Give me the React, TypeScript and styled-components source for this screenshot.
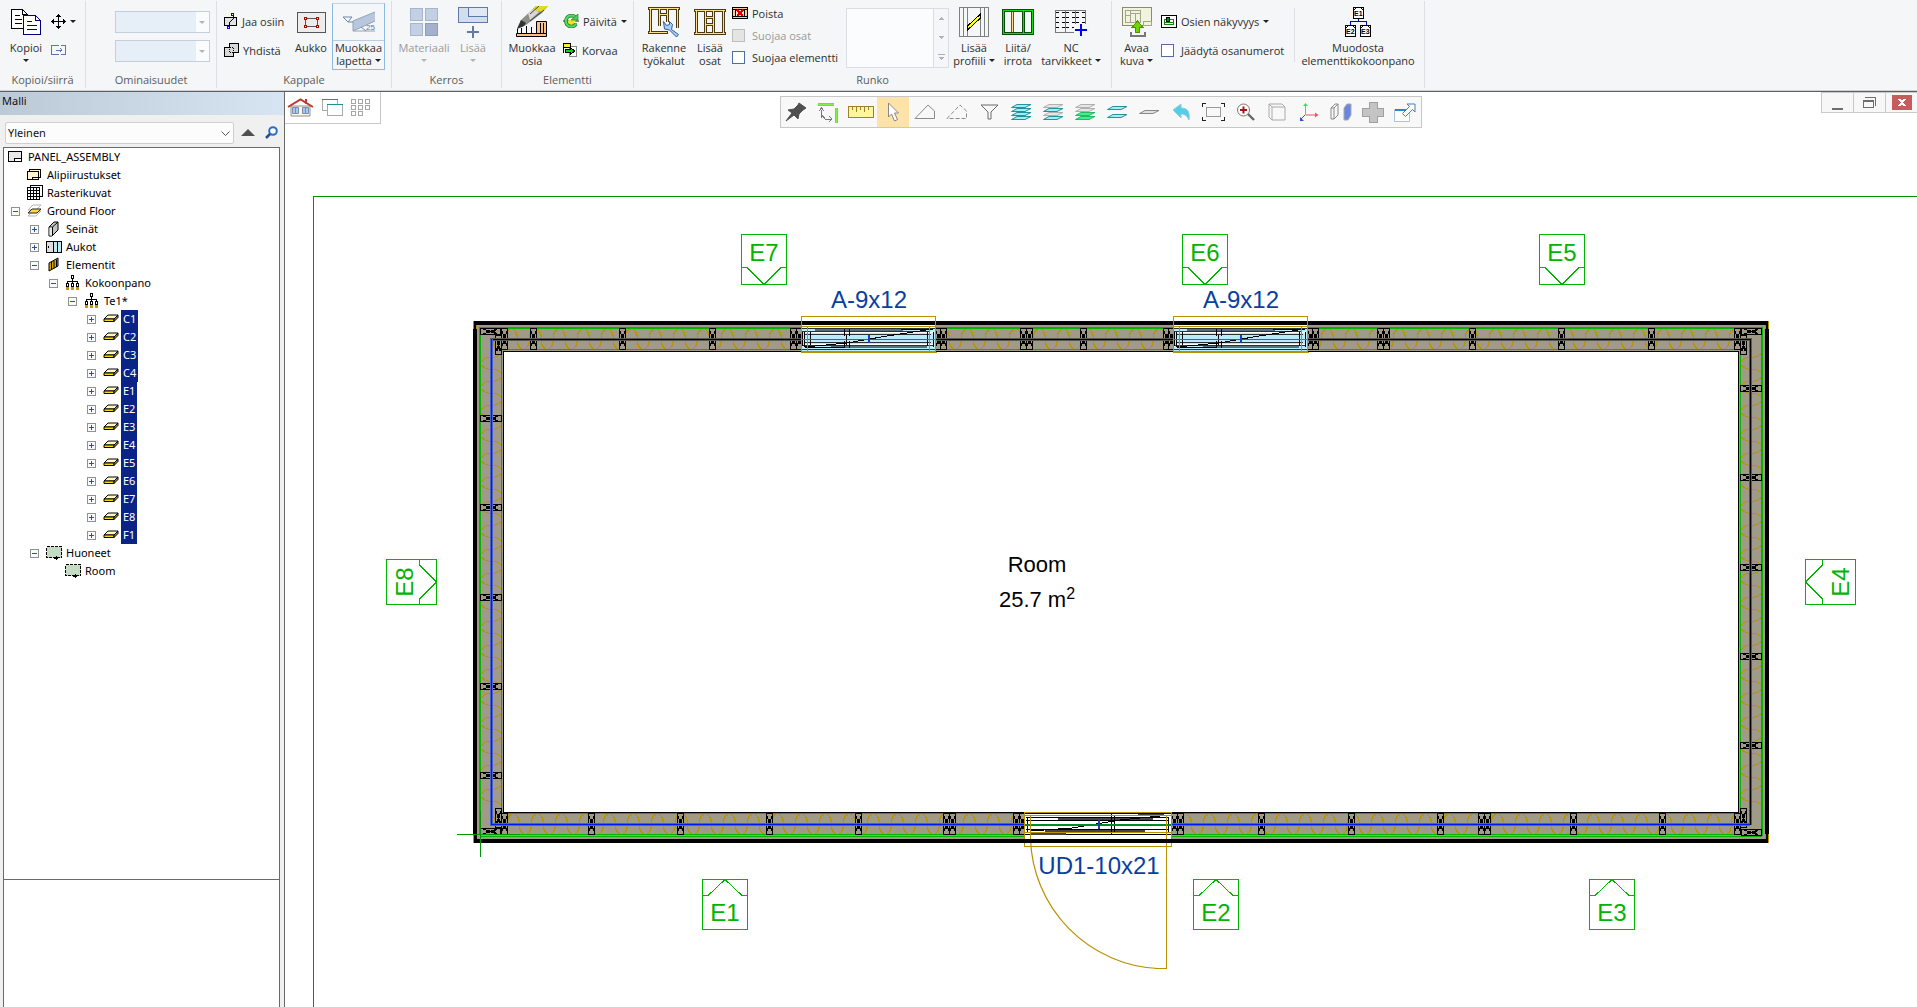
import React from "react";
import styled, { createGlobalStyle } from "styled-components";

const Global = createGlobalStyle`
  * { box-sizing: border-box; }
  body { margin: 0; background: #fff; font-family: "Open Sans", "Noto Sans", sans-serif; font-size: 11px; color: #262626; }
  button, select { font: inherit; color: inherit; }
  svg { display: block; flex: none; }
`;

/* ---------- shell ---------- */

const Shell = styled.div`
  display: flex;
  flex-direction: column;
  height: 100vh;
  overflow: hidden;
`;

const Workspace = styled.div`
  display: flex;
  flex: 1;
  min-height: 0;
`;

/* ---------- ribbon ---------- */

const Ribbon = styled.header`
  display: flex;
  flex: none;
  padding-top: 1px;
  height: 92px;
  background: #f4f6f8;
  border-bottom: 1px solid #5f5f5f;
  box-shadow: inset 0 -1px 0 #d0d2d4;
`;

const GroupBox = styled.section<{ $w: number }>`
  display: flex;
  flex-direction: column;
  flex: none;
  width: ${(p) => p.$w}px;
  margin-bottom: 3px;
  border-right: 1px solid #dcdfe3;
`;

const GroupBody = styled.div<{ $pad: number }>`
  display: flex;
  align-items: flex-start;
  gap: 4px;
  height: 72px;
  padding: 2px 0 0 ${(p) => p.$pad}px;
`;

const GroupTitle = styled.h2`
  margin: 0;
  font-size: 11px;
  font-weight: 400;
  line-height: 16px;
  text-align: center;
  color: #5c5c5c;
`;

const BigButton = styled.button<{ $w: number; $off?: boolean }>`
  display: flex;
  flex-direction: column;
  align-items: center;
  flex: none;
  width: ${(p) => p.$w}px;
  height: 67px;
  padding: 0;
  border: 0;
  background: none;
  line-height: 13px;
  white-space: nowrap;
  color: ${(p) => (p.$off ? "#9a9a9a" : "#2e2e2e")};
`;

const IconBox = styled.span`
  display: flex;
  align-items: center;
  justify-content: center;
  height: 38px;
`;

const ActiveButton = styled(BigButton)`
  border: 1px solid #8db8e0;
  border-top-color: #c6d3e0;

  ${IconBox} {
    width: 100%;
    height: 37px;
    border-bottom: 1px solid #b9cde2;
  }
`;

const Line = styled.span`
  display: flex;
  align-items: center;
  justify-content: center;
  gap: 3px;
  min-height: 13px;
`;

const Caret = styled.i<{ $off?: boolean }>`
  width: 0;
  height: 0;
  border: 3px solid transparent;
  border-top-color: ${(p) => (p.$off ? "#b4b4b4" : "#222")};
  border-bottom-width: 0;
`;

const SmallCol = styled.div<{ $w: number; $dense?: boolean }>`
  display: flex;
  flex-direction: column;
  flex: none;
  gap: ${(p) => (p.$dense ? 2 : 9)}px;
  width: ${(p) => p.$w}px;
  padding-top: ${(p) => (p.$dense ? 0 : 8)}px;
`;

const SmallButton = styled.button`
  display: flex;
  align-items: center;
  gap: 4px;
  height: 20px;
  padding: 0;
  border: 0;
  background: none;
  white-space: nowrap;
  color: #2e2e2e;
`;

const Check = styled.label<{ $off?: boolean }>`
  display: flex;
  align-items: center;
  gap: 7px;
  height: 20px;
  white-space: nowrap;
  color: ${(p) => (p.$off ? "#9a9a9a" : "#2e2e2e")};

  input {
    appearance: none;
    width: 13px;
    height: 13px;
    margin: 0;
    border: 1px solid #4f6ea8;
    background: #fff;
  }
  input:disabled {
    border-color: #bdbdbd;
    background: #e4e4e4;
  }
`;

const PropField = styled.div`
  position: relative;
  height: 20px;

  select {
    appearance: none;
    display: block;
    width: 100%;
    height: 22px;
    border: 1px solid #c5cedb;
    border-radius: 0;
    background: linear-gradient(90deg, #e6eef8 80px, #fafbfc 80px);
    opacity: 1;
  }
  ${Caret} {
    position: absolute;
    right: 5px;
    top: 10px;
  }
`;

const PropCol = styled.div`
  display: flex;
  flex-direction: column;
  gap: 9px;
  width: 95px;
  padding-top: 8px;
`;

const Gallery = styled.div`
  display: flex;
  flex: none;
  width: 103px;
  height: 60px;
  margin-top: 5px;
  border: 1px solid #dadde2;
  background: #fbfcfd;
`;

const GallerySteps = styled.div`
  display: flex;
  flex-direction: column;
  width: 15px;
  margin-left: auto;
  border-left: 1px solid #dadde2;
  background: #f4f6f8;

  button {
    display: flex;
    align-items: center;
    justify-content: center;
    flex: 1;
    padding: 0;
    border: 0;
    background: none;
  }
`;

const Divider = styled.div`
  flex: none;
  width: 1px;
  height: 54px;
  margin: 5px 0 0 4px;
  background: #dcdfe3;
`;

/* ---------- side panel ---------- */

const Side = styled.aside`
  display: flex;
  flex-direction: column;
  flex: none;
  width: 285px;
  border-right: 1px solid #6a6a6a;
  background: #f0f0f0;
  font-family: "Noto Sans", "Open Sans", sans-serif;
`;

const SideTitle = styled.h1`
  margin: 0;
  padding: 0 2px;
  height: 23px;
  font-size: 11px;
  font-weight: 400;
  line-height: 18px;
  color: #111;
  background: linear-gradient(90deg, #bccad8, #d7e4f1);
`;

const Filter = styled.div`
  display: flex;
  align-items: center;
  gap: 7px;
  padding: 7px 5px 3px;

  button {
    padding: 0;
    border: 0;
    background: none;
  }
  button + button {
    margin-left: 3px;
  }
`;

const Combo = styled.div`
  position: relative;
  width: 229px;

  select {
    appearance: none;
    display: block;
    width: 100%;
    height: 22px;
    padding: 0 2px;
    border: 1px solid #cfcfcf;
    border-radius: 2px;
    background: #fcfcfc;
    color: #111;
  }
  svg {
    position: absolute;
    right: 4px;
    top: 9px;
    pointer-events: none;
  }
`;

const TreeBox = styled.ul`
  flex: 1 1 734px;
  min-height: 0;
  margin: 0 4px 0 3px;
  padding: 0;
  overflow: hidden;
  list-style: none;
  border: 1px solid #6a6a6a;
  background: #fff;
`;

const Detail = styled.div`
  flex: 0 1 127px;
  margin: 0 4px 0 3px;
  border: 1px solid #6a6a6a;
  border-width: 0 1px;
  background: #fff;
`;

const TreeRow = styled.li<{ $level: number }>`
  display: flex;
  align-items: center;
  height: 18px;
  padding-left: ${(p) => (p.$level ? p.$level * 19 - 12 : 4)}px;
  color: #000;
`;

const Expander = styled.button`
  display: flex;
  width: 9px;
  height: 9px;
  padding: 0;
  border: 0;
  background: none;
`;

const ExpanderSlot = styled.span`
  display: flex;
  width: 16px;
  padding-top: 2px;
`;

const TreeIcon = styled.span`
  display: flex;
  width: 18px;
`;

const TreeLabel = styled.span<{ $on: boolean }>`
  padding: 0 2px;
  line-height: 18px;
  white-space: nowrap;
  color: ${(p) => (p.$on ? "#fff" : "#000")};
  background: ${(p) => (p.$on ? "#0a2387" : "none")};
`;

/* ---------- drawing area ---------- */

const Main = styled.main`
  position: relative;
  flex: 1;
  min-width: 0;
  overflow: hidden;
  background: #fff;
`;

const Plan = styled.svg`
  position: absolute;
  inset: 0;
  width: 100%;
  height: 100%;
  font-family: "Liberation Sans", Arial, sans-serif;
`;

const Overlay = styled.div`
  position: relative;
  display: grid;
  grid-template-columns: 1fr auto 1fr;
  align-items: start;
`;

const ViewTabs = styled.div`
  display: flex;
  align-items: center;
  justify-self: start;
  gap: 8px;
  width: 96px;
  height: 32px;
  padding-left: 2px;
  border: 1px solid #c8c8c8;
  border-width: 0 1px 1px 0;
  background: #fff;
`;

const ToolStrip = styled.div`
  display: flex;
  margin-top: 4px;
  border: 1px solid #c8c8c8;
  background: #f8f8f8;
`;

const Tool = styled.button<{ $on?: boolean }>`
  display: flex;
  align-items: center;
  justify-content: center;
  width: 32px;
  height: 30px;
  padding: 0;
  border: 0;
  background: ${(p) => (p.$on ? "#fde3a7" : "none")};
`;

const PlainButton = styled.button`
  padding: 0;
  border: 0;
  background: none;
`;

const WindowButtons = styled.div`
  display: flex;
  justify-self: end;
`;

const WinButton = styled.button`
  display: flex;
  align-items: center;
  justify-content: center;
  width: 32px;
  height: 21px;
  padding: 0;
  border: 1px solid #cacaca;
  border-right-width: 0;
  background: #f7f7f7;
`;

/* ---------- icons ---------- */

type IconProps = { w: number; h: number; children: React.ReactNode; soft?: boolean };
const Icon = ({ w, h, children, soft }: IconProps) => (
  <svg width={w} height={h} viewBox={`0 0 ${w} ${h}`} fill="none" shapeRendering={soft ? "auto" : "crispEdges"} aria-hidden="true">
    {children}
  </svg>
);

const CopyIcon = () => (
  <Icon w={32} h={28}>
    <path d="M1.5 1.5h11l5 5v14h-16z" fill="#fff" stroke="#000" />
    <path d="M12.5 1.5v5h5M5 7.5h5M5 11.5h7M5 15.5h7" stroke="#000" />
    <path d="M13.5 7.5h12l5 5v14h-17z" fill="#fff" stroke="#00007c" />
    <path d="M25.5 7.5v5h5M17 13.5h5M17 17.5h10M17 21.5h10" stroke="#00007c" />
  </Icon>
);
const MoveIcon = () => (
  <Icon w={15} h={15}>
    <path d="M7.5 1v13M1 7.5h13" stroke="#000" />
    <path d="M5 3h5L7.5 0zM5 12h5l-2.5 3zM3 5v5L0 7.5zM12 5v5l3-2.5z" fill="#000" />
  </Icon>
);
const MoveBoxIcon = () => (
  <Icon w={15} h={10}>
    <path d="M8 .5H.5v9H8M10 .5h4v9h-4M5 5h6M9 3l2 2-2 2" stroke="#5b76ad" />
  </Icon>
);
const SplitIcon = () => (
  <Icon w={14} h={17}>
    <path d="M.5 4.5h12v8H.5z" fill="#e2e2e2" stroke="#000" />
    <path d="M9 3v3L5 10v4" stroke="#000" />
    <path d="M7.5 .5h2v2h-2zM3.5 13.5h2v2h-2z" fill="#fff" stroke="#0000f0" />
  </Icon>
);
const JoinIcon = () => (
  <Icon w={15} h={14}>
    <path d="M5.5 .5h9v9h-5v4h-9v-9h5z" fill="#d8d8d8" stroke="#000" />
    <path d="M5.5 4.5h4v5h-4z" stroke="#000" strokeDasharray="1 1" />
  </Icon>
);
const HoleIcon = () => (
  <Icon w={29} h={21}>
    <path d="M.5 .5h28v20H.5z" fill="#ececec" stroke="#555" />
    <path d="M8.5 6.5h12v8h-12z" stroke="#555" />
    <path d="M7.5 5.5h2v2h-2zM19.5 5.5h2v2h-2zM7.5 13.5h2v2h-2zM19.5 13.5h2v2h-2z" fill="#fff" stroke="#c00000" />
  </Icon>
);
const SlopeIcon = () => (
  <Icon w={34} h={24} soft>
    <path d="M11 11L33 2v9L11 21z" fill="#b9c7dc" />
    <path d="M11 11L33 2M11 21L33 11M11 11v10h22" stroke="#8fa3c0" />
    <path d="M1 7h9l-4 5zM6 12h5" stroke="#7187ab" />
    <path d="M19 17l5 4" stroke="#7187ab" />
    <text x="24" y="20" fontSize="8" fontFamily="Liberation Sans" fill="#5f769d">25</text>
  </Icon>
);
const MaterialIcon = () => (
  <Icon w={28} h={28}>
    <path d="M.5 .5h12v12H.5zM15.5 .5h12v12h-12zM.5 15.5h12v12H.5z" fill="#c3cfe2" stroke="#a6b5cd" />
    <path d="M15.5 15.5h12v12h-12z" fill="#a3b1cc" stroke="#8b9cbc" />
  </Icon>
);
const AddLayerIcon = () => (
  <Icon w={30} h={31}>
    <path d="M.5 .5h29v15H.5z" fill="#d3deed" stroke="#5f7aa6" />
    <path d="M10.5 .5v9h19v-9z" fill="#dfe8f4" stroke="#5f7aa6" />
    <path d="M15 19v12M9 25h12" stroke="#5f7aa6" strokeWidth="2" />
  </Icon>
);
const EditPartIcon = () => (
  <Icon w={32} h={32} soft>
    <path d="M.5 27.5h30v3H.5z" fill="#fcbf85" stroke="#000" />
    <path d="M1.5 27v-4M5.5 27v-5M10.5 27v-7M15.5 27v-6" stroke="#000" />
    <path d="M20.500 15.500h10V27.500h-10z" fill="#fcbf85" stroke="#000" />
    <path d="M24.5 17v10M27.5 17v10" stroke="#000" />
    <path d="M32 0H20L5 14 1 23l9-4L26 7z" fill="#8f8f8b" />
    <path d="M20 0h12l-6 6-9-2z" fill="#e2dc20" />
    <path d="M12 7l5-4 6 3-9 8z" fill="#d8d8d0" />
    <path d="M5 14l5 3-2 3-7 3z" fill="#333" />
    <path d="M23 0l-9 8M28 4L14 15" stroke="#444" />
  </Icon>
);
const RefreshIcon = () => (
  <Icon w={16} h={14} soft>
    <path d="M0 7h16M2 10h12" stroke="#222" />
    <path d="M4 9l2-3h7l-3 5H5z" fill="#f5e21a" />
    <path d="M12.5 3.500A5.500 5.500 0 1 0 13 10" stroke="#1f8a2b" strokeWidth="3.600" />
    <path d="M12.5 3.500A5.500 5.500 0 1 0 13 10" stroke="#5ad566" strokeWidth="2" />
    <path d="M15 0v6H8z" fill="#4ccc58" stroke="#1f8a2b" strokeWidth=".7" />
  </Icon>
);
const ReplaceIcon = () => (
  <Icon w={15} h={14}>
    <path d="M6.5 3.5h7v10h-7z" fill="#fff" stroke="#888" />
    <path d="M.5 .5h7v4h-7z" fill="#ffef3a" stroke="#000" />
    <path d="M.5 4v6" stroke="#000" />
    <path d="M2.5 6.5h5v-2l4 3.5-4 3.5v-2h-5z" fill="#12d212" stroke="#000" />
  </Icon>
);
const FrameWrenchIcon = () => (
  <Icon w={32} h={30}>
    <path d="M0 1.5h32M0 25.5h20" stroke="#4a3a10" strokeWidth="3" />
    <path d="M2.5 2v23M11.5 2v17M19.5 2v13M29.5 2v19M12 7.5h8" stroke="#4a3a10" strokeWidth="3" />
    <path d="M1 1.5h30M1 25.5h18M2.5 2v23M11.5 2v17M19.5 2v13M29.5 2v19M12 7.5h8" stroke="#ffe08a" />
    <path d="M15.500 14.500l3 4 3-1v-3l3 3-1 5 7 5-2 2.500-7-7-5-1z" fill="#a9cdf5" stroke="#2e5e9e" shapeRendering="auto" />
  </Icon>
);
const FrameIcon = () => (
  <Icon w={32} h={27}>
    <path d="M0 1.5h32M0 24.5h32M2.5 2v23M11.5 2v23M19.5 2v23M29.5 2v23M12 8.5h8M12 15.500h8" stroke="#4a3a10" strokeWidth="3" />
    <path d="M1 1.5h30M1 24.5h30M2.5 2v23M11.5 2v23M19.5 2v23M29.5 2v23M12 8.5h8M12 15.500h8" stroke="#ffe08a" />
  </Icon>
);
const RemoveIcon = () => (
  <Icon w={16} h={12}>
    <path d="M.5 .5h15v11H.5z" fill="#fcc89a" stroke="#000" />
    <path d="M0 2.500h16M0 9.500h16M3.500 2v8M12.500 2v8" stroke="#000" />
    <path d="M4 3h8v6H4z" fill="#f8e4d4" />
    <path d="M5 3l6 6M11 3L5 9" stroke="#e00000" strokeWidth="2" />
  </Icon>
);
const ProfileIcon = () => (
  <Icon w={30} h={30}>
    <path d="M.5 .5h29v29H.5zM4.5 0v30M8.5 0v30M21.5 0v30M25.5 0v30" stroke="#808080" />
    <path d="M8.5 19L21.5 7v4L8.5 23z" fill="#ffff20" stroke="#000" />
  </Icon>
);
const AttachIcon = () => (
  <Icon w={32} h={27}>
    <path d="M0 1.500h32M0 24.500h32M1.500 2v23M21.500 2v23M30.500 2v23" stroke="#064f06" strokeWidth="3" />
    <path d="M10.500 3v20" stroke="#6d5220" strokeWidth="3" />
    <path d="M10.500 3v20" stroke="#ffe08a" />
    <path d="M1 1.500h30M1 24.500h30M1.500 2v23M21.500 2v23M30.500 2v23" stroke="#10e010" />
  </Icon>
);
const NcIcon = () => (
  <Icon w={32} h={28}>
    <path d="M.5 2.5h30v22H.5zM10.5 2v23M20.5 2v23" stroke="#777" />
    <path d="M2.500 4v20M8.500 4v20M12.500 4v20M18.500 4v20M22.500 4v20M28.500 4v20" stroke="#000" strokeWidth="3" strokeDasharray="1 4" />
    <path d="M19 16h13v12H19z" fill="#f4f6f8" />
    <path d="M26 16v12M20 22h12" stroke="#0000f0" strokeWidth="2" />
  </Icon>
);
const OpenIcon = () => (
  <Icon w={30} h={30}>
    <path d="M.5 .5h29v18H.5z" fill="#f2f3dc" stroke="#8a8c70" />
    <path d="M3.5 3.5h15v12h-15zM8.5 3v12M3 8.5h6M9 6.5h9M13.5 6v9M21.5 14.5h8v4h-8z" stroke="#a3a58c" />
    <path d="M8.5 25v4h14v-4" stroke="#777" strokeWidth="2" />
    <path d="M15.5 14l5 6h-3v5h-4v-5h-3z" fill="#6fd400" stroke="#4c9400" />
  </Icon>
);
const VisibilityIcon = () => (
  <Icon w={16} h={13}>
    <path d="M.5 .5h15v12H.5z" fill="#fff" stroke="#000" />
    <path d="M3.500 4.500h9v5h-9zM4 7.500h8" stroke="#0b8a0b" />
    <path d="M5.5 2.5h3v4h-3z" stroke="#000" fill="#0b8a0b" />
  </Icon>
);
const AssemblyIcon = () => (
  <Icon w={27} h={30}>
    <path d="M13.5 12v3M5.5 18v-3.5h16V18" stroke="#0000e0" />
    {[[8, 0, "E1"], [0, 18, "E2"], [15, 18, "E3"]].map(([x, y, t]) => (
      <g key={t as string} transform={`translate(${x} ${y})`}>
        <path d="M.5 .5h10v11H.5z" fill="#fff" stroke="#000" />
        <path d="M1 3l2-2M10 3L8 1" stroke="#000" />
        <text x="1" y="9" fontSize="7" fontWeight="700" fontFamily="Liberation Sans" fill="#000">{t}</text>
      </g>
    ))}
  </Icon>
);

const HouseIcon = () => (
  <Icon w={27} h={19} soft>
    <path d="M4 8h19v10H4z" fill="#fff6df" stroke="#8f8f8f" />
    <path d="M19 1v5M1 9L13.5 1.5 26 9" stroke="#c0392b" strokeWidth="2" />
    <path d="M5.5 9.5h6v6h-6zM15.5 9.5h6v6h-6z" fill="#a9c8ee" stroke="#7a8fae" />
    <path d="M8.5 9v7M18.5 9v7" stroke="#7a8fae" />
  </Icon>
);
const WindowsIcon = () => (
  <Icon w={21} h={19}>
    <path d="M.5 1.5h15v11H.5z" fill="#fff" stroke="#aaa" />
    <path d="M0 1.5h16" stroke="#1e9090" />
    <path d="M5.5 6.5h15v11h-15z" fill="#fff" stroke="#aaa" />
    <path d="M5 6.5h16" stroke="#1e9090" />
  </Icon>
);
const GridIcon = () => (
  <Icon w={20} h={18}>
    <path d="M.5 .5h4v4h-4zM7.5 .5h4v4h-4zM14.5 .5h4v4h-4zM.5 6.5h4v4h-4zM7.5 6.5h4v4h-4zM14.5 6.5h4v4h-4zM.5 12.5h4v4h-4zM7.5 12.5h4v4h-4z" stroke="#a5a5a5" />
  </Icon>
);

/* a stack of sheets for the layer tools, one fill and stroke each */
const Sheets = ({ rows }: { rows: [number, string, string][] }) => (
  <Icon w={22} h={18} soft>
    {[...rows].reverse().map(([y, fill, stroke]) => (
      <path key={y} d={`M1.5 ${y + 3.5}L7 ${y + 0.5}h14l-6 3z`} fill={fill} stroke={stroke} />
    ))}
  </Icon>
);
const TEAL: [string, string] = ["#9cf0fa", "#2a8f98"];
const GREY: [string, string] = ["#e6e6e6", "#b0b0b0"];

const tools: { name: string; icon: React.ReactNode; on?: boolean }[] = [
  { name: "Kiinnitä", icon: <Icon w={24} h={20} soft><path d="M14 1l7 5-3 2-4 4-1 5-4-4-8 6 6-8-4-3 6-1 4-4z" fill="#505050" stroke="#505050" /></Icon> },
  { name: "Akselit", icon: <Icon w={24} h={21}><path d="M1 2h16M19 6v15" stroke="#aaa" strokeWidth="3" /><path d="M1 2h16M19 6v15" stroke="#80f040" /><path d="M4.5 16V8M2 9l2.5-3L7 9M5 13l3 4h6M12 14l3 3-3 3" stroke="#777" /></Icon> },
  { name: "Mitta", icon: <Icon w={26} h={13}><path d="M.5 .5h25v11H.5z" fill="#fff79a" stroke="#a08030" /><path d="M4.5 1v3M8.5 1v5M12.5 1v3M16.5 1v5M20.5 1v3" stroke="#a08030" /></Icon> },
  { name: "Valitse", on: true, icon: <Icon w={13} h={20} soft><path d="M1.5 1v14l3-3 3 7 3-1.5-3-6.5h4z" fill="#fff" stroke="#888" /></Icon> },
  { name: "Monikulmio", icon: <Icon w={22} h={16} soft><path d="M1 14.5L14 1l6.5 6v7.500z" stroke="#8a8a8a" /></Icon> },
  { name: "Katkomonikulmio", icon: <Icon w={22} h={16} soft><path d="M1 14.5L14 1l6.5 6v7.500z" stroke="#8a8a8a" strokeDasharray="4 2" /></Icon> },
  { name: "Suodatin", icon: <Icon w={19} h={16} soft><path d="M1 1h17l-7 7v7H8V8z" stroke="#6a6a6a" /></Icon> },
  { name: "Kaikki kerrokset", icon: <Sheets rows={[[1, ...TEAL], [5, ...TEAL], [9, ...TEAL], [13, ...TEAL]]} /> },
  { name: "Osa kerroksista", icon: <Sheets rows={[[1, ...GREY], [5, ...TEAL], [9, ...GREY], [13, ...TEAL]]} /> },
  { name: "Nykyinen kerros", icon: <Sheets rows={[[1, ...GREY], [5, ...GREY], [9, "#4aec8c", "#25b868"], [13, "#4aec8c", "#25b868"]]} /> },
  { name: "Kaksi kerrosta", icon: <Sheets rows={[[3, ...TEAL], [11, ...TEAL]]} /> },
  { name: "Yksi kerros", icon: <Sheets rows={[[7, "#e0e0e0", "#888"]]} /> },
  { name: "Kumoa", icon: <Icon w={19} h={18} soft><path d="M1 7l8-6v4c7 0 9 4 8 12-2-4-4-6-8-6v4z" fill="#4fd0e8" stroke="#9ac6d8" /></Icon> },
  { name: "Sovita", icon: <Icon w={23} h={18}><path d="M4.5 4.5h14v9h-14z" stroke="#999" /><path d="M.5 4V.5H4M19 .5h3.500V4M.5 14v3.500H4M19 17.5h3.500V14" stroke="#222" /></Icon> },
  { name: "Suurenna", icon: <Icon w={19} h={18} soft><circle cx="7.5" cy="7" r="6" fill="#fff" stroke="#777" /><path d="M12 11l6 6" stroke="#666" strokeWidth="2.400" /><path d="M7.5 3.5v7M4 7h7" stroke="#a01818" strokeWidth="2" /></Icon> },
  { name: "Kuutio", icon: <Icon w={18} h={18} soft><path d="M1 1h13l3 3v13H4l-3-3zM4 4h13M4 4v13M1 1l3 3" stroke="#aaa" /></Icon> },
  { name: "Koordinaatisto", icon: <Icon w={20} h={20} soft><path d="M6.5 13V2" stroke="#3ae05a" /><path d="M4 4l2.5-3L9 4z" fill="#3ae05a" /><path d="M7 13h11" stroke="#f05060" /><path d="M16 10.5l3.5 2.500-3.5 2.500z" fill="#f05060" /><path d="M6 13l-4 4" stroke="#3050d0" /><path d="M1 15v4h4z" fill="#3050d0" /></Icon> },
  { name: "Seinät 3D", icon: <Icon w={22} h={18} soft><path d="M1 5l4-4h3v11l-4 4H1zM4 5v11M1 5h3l4-4" stroke="#888" /><path d="M14 5l3-4h4v11l-3 5h-4z" fill="#6a86e0" stroke="#aaa" /></Icon> },
  { name: "Lisää", icon: <Icon w={22} h={21}><path d="M7 .5h8v6h6.500v8H15v6H7v-6H.5v-8H7z" fill="#c4c4c4" stroke="#a0a0a0" /></Icon> },
  { name: "Uusi ikkuna", icon: <Icon w={22} h={19} soft><path d="M.5 6.500h15v12H.5z" fill="#fff" stroke="#aac4dc" /><path d="M1 7h14" stroke="#2e86c8" strokeWidth="2" /><path d="M21 1v8l-2.500-2.500-7 7-3-3 7-7L13 1z" fill="#fff" stroke="#2e86c8" /></Icon> },
];

/* ---------- ribbon controls ---------- */

type BigProps = { w: number; icon: React.ReactNode; lines: string[]; caret?: boolean; off?: boolean; active?: boolean };
const Big = ({ w, icon, lines, caret, off, active }: BigProps) => {
  const Base = active ? ActiveButton : BigButton;
  return (
    <Base $w={w} $off={off} disabled={off}>
      <IconBox>{icon}</IconBox>
      {lines.map((t, i) => (
        <Line key={t}>
          {t}
          {caret && lines.length > 1 && i === lines.length - 1 && <Caret />}
        </Line>
      ))}
      {caret && lines.length === 1 && <Line><Caret $off={off} /></Line>}
    </Base>
  );
};

const Group = ({ w, pad, title, children }: { w: number; pad: number; title: string; children: React.ReactNode }) => (
  <GroupBox $w={w}>
    <GroupBody $pad={pad}>{children}</GroupBody>
    {title && <GroupTitle>{title}</GroupTitle>}
  </GroupBox>
);

const RibbonBar = () => (
  <Ribbon>
    <Group w={86} pad={5} title="Kopioi/siirrä">
      <Big w={42} icon={<CopyIcon />} lines={["Kopioi"]} caret />
      <SmallCol $w={30}>
        <SmallButton aria-label="Siirrä"><MoveIcon /><Caret /></SmallButton>
        <SmallButton aria-label="Siirrä osa"><MoveBoxIcon /></SmallButton>
      </SmallCol>
    </Group>
    <Group w={131} pad={29} title="Ominaisuudet">
      <PropCol>
        <PropField><select disabled aria-label="Ominaisuus 1" /><Caret $off /></PropField>
        <PropField><select disabled aria-label="Ominaisuus 2" /><Caret $off /></PropField>
      </PropCol>
    </Group>
    <Group w={175} pad={7} title="Kappale">
      <SmallCol $w={66}>
        <SmallButton><SplitIcon />Jaa osiin</SmallButton>
        <SmallButton><JoinIcon />Yhdistä</SmallButton>
      </SmallCol>
      <Big w={34} icon={<HoleIcon />} lines={["Aukko"]} />
      <Big w={53} icon={<SlopeIcon />} lines={["Muokkaa", "lapetta"]} caret active />
    </Group>
    <Group w={110} pad={4} title="Kerros">
      <Big w={56} icon={<MaterialIcon />} lines={["Materiaali"]} caret off />
      <Big w={34} icon={<AddLayerIcon />} lines={["Lisää"]} caret off />
    </Group>
    <Group w={132} pad={3} title="Elementti">
      <Big w={54} icon={<EditPartIcon />} lines={["Muokkaa", "osia"]} />
      <SmallCol $w={66}>
        <SmallButton><RefreshIcon />Päivitä <Caret /></SmallButton>
        <SmallButton><ReplaceIcon />Korvaa</SmallButton>
      </SmallCol>
    </Group>
    <Group w={478} pad={6} title="Runko">
      <Big w={48} icon={<FrameWrenchIcon />} lines={["Rakenne", "työkalut"]} />
      <Big w={36} icon={<FrameIcon />} lines={["Lisää", "osat"]} />
      <SmallCol $w={110} $dense>
        <SmallButton><RemoveIcon />Poista</SmallButton>
        <Check $off><input type="checkbox" disabled />Suojaa osat</Check>
        <Check><input type="checkbox" />Suojaa elementti</Check>
      </SmallCol>
      <Gallery>
        <GallerySteps>
          <button aria-label="Edellinen"><Icon w={6} h={3}><path d="M0 3h6L3 0z" fill="#aab2bd" /></Icon></button>
          <button aria-label="Seuraava"><Icon w={6} h={3}><path d="M0 0h6L3 3z" fill="#aab2bd" /></Icon></button>
          <button aria-label="Lisää vaihtoehtoja"><Icon w={7} h={6}><path d="M0 0h7v1H0zM0 3h6L3 6z" fill="#aab2bd" /></Icon></button>
        </GallerySteps>
      </Gallery>
      <Big w={42} icon={<ProfileIcon />} lines={["Lisää", "profiili"]} caret />
      <Big w={38} icon={<AttachIcon />} lines={["Liitä/", "irrota"]} />
      <Big w={60} icon={<NcIcon />} lines={["NC", "tarvikkeet"]} caret />
    </Group>
    <Group w={313} pad={4} title="">
      <Big w={41} icon={<OpenIcon />} lines={["Avaa", "kuva"]} caret />
      <SmallCol $w={125}>
        <SmallButton><VisibilityIcon />Osien näkyvyys <Caret /></SmallButton>
        <Check><input type="checkbox" />Jäädytä osanumerot</Check>
      </SmallCol>
      <Divider />
      <Big w={118} icon={<AssemblyIcon />} lines={["Muodosta", "elementtikokoonpano"]} />
    </Group>
  </Ribbon>
);

/* ---------- model tree ---------- */

const treeIcons: Record<string, React.ReactNode> = {
  root: <Icon w={14} h={12}><path d="M.5 .5h13v10H.5z" fill="#e8e8e8" stroke="#000" /><path d="M6.5 10.500V7.500h7v3z" fill="#fff" stroke="#000" /></Icon>,
  subs: <Icon w={14} h={12}><path d="M2.5 .5h11v8h-11z" fill="#fff3d0" stroke="#000" /><path d="M.5 2.5h11v8H.5z" fill="#fff3d0" stroke="#000" /><path d="M5.5 10V8.500h6" stroke="#000" /></Icon>,
  raster: <Icon w={16} h={15}><path d="M3.5 .5h12v11h-12z" fill="#fff" stroke="#000" /><path d="M.5 2.5h12v12H.5zM3.5 2v12M6.5 2v12M9.5 2v12M0 5.5h12M0 8.5h12M0 11.5h12" fill="#fff" stroke="#000" /></Icon>,
  floor: <Icon w={15} h={13} soft><path d="M1 12l5-5h8l-5 5zM1 6l5-5h8l-5 5z" stroke="#b5b5b5" /><path d="M1 9l4-4h9l-4 4z" fill="#ffd83a" stroke="#222" /></Icon>,
  wall: <Icon w={15} h={16} soft><path d="M3 6l5-5h4v8l-6 6H3z" fill="#c4c4c4" stroke="#000" /><path d="M3 6h3.500v9M6.500 6l5.500-5" stroke="#000" /><path d="M3.500 6.500H6V14.500H3.500z" fill="#dfeaea" /></Icon>,
  openings: <Icon w={16} h={12}><path d="M.5 .5h15v11H.5z" fill="#bfe8f0" stroke="#000" /><path d="M1 1h6v10H1z" fill="#ddd" /><path d="M7.5 0v12M11.5 0v12" stroke="#000" /><path d="M2 5h1v2H2z" fill="#000" /></Icon>,
  elements: <Icon w={14} h={15} soft><path d="M3 6l9-5v8l-9 5z" fill="#d8a800" stroke="#000" /><path d="M5.500 5v8M8 4v7.500M10.500 2.500v7.500" stroke="#000" /></Icon>,
  assembly: <Icon w={15} h={15}><path d="M7.500 4v4M2.500 8V6.500h10V8" stroke="#000" /><path d="M6.500 .5h2v3h-2zM1.500 8.5h2v3h-2zM6.500 8.5h2v3h-2zM11.500 8.5h2v3h-2z" fill="#fff" stroke="#000" /><path d="M1 12h3v3H1zM6 12h3v3H6zM11 12h3v3h-3z" fill="#c09a00" /></Icon>,
  panel: <Icon w={16} h={9} soft><path d="M1 5l4-4h10l-4 4z" fill="#fffbc0" stroke="#000" /><path d="M1 5h10v2.500H1z" fill="#ffd800" stroke="#000" /><path d="M11 5l4-4v2.500l-4 4z" fill="#a88a00" stroke="#000" /></Icon>,
  room: <Icon w={16} h={14}><path d="M.5 .5h15v11H.5z" fill="#c4dcc4" stroke="#000" strokeDasharray="3 1" /><path d="M8 12.500h4M10.500 10v4" stroke="#000" /></Icon>,
};

type Node = { label: string; level: number; icon: string; open?: boolean; on?: boolean };
const nodes: Node[] = [
  { label: "PANEL_ASSEMBLY", level: 0, icon: "root" },
  { label: "Alipiirustukset", level: 1, icon: "subs" },
  { label: "Rasterikuvat", level: 1, icon: "raster" },
  { label: "Ground Floor", level: 1, icon: "floor", open: true },
  { label: "Seinät", level: 2, icon: "wall", open: false },
  { label: "Aukot", level: 2, icon: "openings", open: false },
  { label: "Elementit", level: 2, icon: "elements", open: true },
  { label: "Kokoonpano", level: 3, icon: "assembly", open: true },
  { label: "Te1*", level: 4, icon: "assembly", open: true },
  ...["C1", "C2", "C3", "C4", "E1", "E2", "E3", "E4", "E5", "E6", "E7", "E8", "F1"].map((label) => ({
    label, level: 5, icon: "panel", open: false, on: true,
  })),
  { label: "Huoneet", level: 2, icon: "room", open: true },
  { label: "Room", level: 3, icon: "room" },
];

const SidePanel = () => (
  <Side>
    <SideTitle>Malli</SideTitle>
    <Filter>
      <Combo>
        <select aria-label="Näkymä"><option>Yleinen</option></select>
        <Icon w={9} h={6} soft><path d="M.5 .5l4 4 4-4" stroke="#555" /></Icon>
      </Combo>
      <button aria-label="Ylös"><Icon w={14} h={7} soft><path d="M0 7h14L7 0z" fill="#505050" /></Icon></button>
      <button aria-label="Etsi"><Icon w={13} h={13} soft><circle cx="8" cy="5" r="3.800" stroke="#2a6fbe" strokeWidth="2" fill="#fff" /><path d="M5 8l-4 4" stroke="#1f5098" strokeWidth="2.500" /></Icon></button>
    </Filter>
    <TreeBox>
      {nodes.map((n) => (
        <TreeRow key={`${n.level}-${n.label}`} $level={n.level}>
          {n.level > 0 && (
            <ExpanderSlot>
              {n.open !== undefined && (
                <Expander aria-label={n.open ? "Sulje" : "Avaa"}>
                  <Icon w={9} h={9}>
                    <path d="M.5 .5h8v8h-8z" fill="#fafafa" stroke="#919191" />
                    <path d={n.open ? "M2 4.5h5" : "M2 4.5h5M4.5 2v5"} stroke="#2f4f9f" />
                  </Icon>
                </Expander>
              )}
            </ExpanderSlot>
          )}
          <TreeIcon>{treeIcons[n.icon]}</TreeIcon>
          <TreeLabel $on={!!n.on}>{n.label}</TreeLabel>
        </TreeRow>
      ))}
    </TreeBox>
    <Detail />
  </Side>
);

/* ---------- floor plan ---------- */

const GREEN = "#00b400";
const GOLD = "#b89000";
const BEIGE = "#a09a88";

/* insulation: a run of rounded zigzags, along x; rotated for the side walls */
const wave = (length: number) => {
  let d = "";
  for (let x = 0; x + 24 <= length; x += 24) {
    d += `M${x + 3} 0L${x + 6} 4L${x + 7} 7V14L${x + 9} 18L${x + 12} 21M${x + 15} 21L${x + 18} 17L${x + 19} 14V7L${x + 21} 3L${x + 24} 0`;
  }
  return d;
};

const Stud = ({ x, y, flat, len = 21 }: { x: number; y: number; flat?: boolean; len?: number }) => (
  <g transform={`translate(${x} ${y})${flat ? " rotate(-90)" : ""}`} stroke="#000" fill="none">
    <rect x="0.5" y="0.5" width="6" height={len} fill={BEIGE} />
    <path d={`M1 3l5 ${len - 6}M6 3L1 ${len - 3}M3.5 6v${len - 11}`} />
    <path d="M2.5 7v3M4.500 7v3M2.5 13v3M4.500 13v3" />
  </g>
);

const topStuds = [501, 530, 619, 709, 790, 796, 935, 940, 1020, 1026, 1080, 1163, 1168, 1307, 1312, 1377, 1383, 1469, 1558, 1648, 1734];
const bottomStuds = [501, 588, 677, 766, 855, 943, 949, 1013, 1019, 1171, 1177, 1258, 1348, 1437, 1478, 1484, 1570, 1659, 1734];
const leftStuds = [422, 511, 601, 690, 779];
const rightStuds = [392, 481, 571, 660, 749];

const WindowMark = ({ x }: { x: number }) => (
  <g transform={`translate(${x} 0)`} fill="none">
    <rect x="0" y="325" width="135" height="27" fill="#fff" />
    <rect x="1" y="328" width="133" height="23" fill="#b9ebfb" />
    <path d="M3 332.500h129M3 344.500h129" stroke="#fff" />
    <path d="M0 328.500h135M0 331.500h128M4 334.500h126M4 342.500h126M0 345.500h132M0 349.500h135" stroke="#2a3438" />
    <path d="M14 330h88M30 347h96" stroke="#55707c" strokeWidth="2" />
    <path d="M4 347l42-4 40-7 46-7M100 329.500h30M4 347.500h40" stroke="#000" />
    <path d="M43.5 329v7M48.5 329v7M43.5 341v7M48.5 341v7M45.5 335v10M1.500 332v14M3.500 332v15M9.500 332v13M126 332v14M132.500 332v15" stroke="#000" />
    <path d="M0 339.500h135" stroke="#4f6a28" />
    <path d="M0 339.500h7M128 339.500h7" stroke={GREEN} />
    <path d="M67.5 335v8" stroke="#1540c0" strokeWidth="2" />
    <path d="M.5 316.5h134v35H.5zM0 326.500h135M6.500 327v25M128.500 327v25M0 352.500h136" stroke={GOLD} />
  </g>
);

const DoorMark = () => (
  <g fill="none">
    <rect x="1024" y="812" width="148" height="27" fill="#fff" />
    <path d="M1018 813.5h165M1026 817.5h143M1026 820.5h143M1026 829.5h143M1024 834.5h148" stroke="#000" />
    <path d="M1058 818.500h95M1045 831h100M1138 814.500h26M1030 833.500h36" stroke="#444" strokeWidth="2" />
    <path d="M1030 831l42-3 48-8 50-5" stroke="#000" />
    <path d="M1111.5 813v22M1114.5 816v16M1027.500 818v14M1168.500 818v14" stroke="#000" />
    <path d="M1024 824.500h148" stroke="#008a30" strokeWidth="2" />
    <path d="M1098.5 820v9" stroke="#1540c0" strokeWidth="2" />
    <path d="M1024.5 812.5h147v34h-147zM1024 815.5h147M1024 832.5h147M1030.5 815v24M1166.5 815v153.500h-12" stroke={GOLD} />
    <path d="M1030.5 839A134 134 0 0 0 1158 968.5" stroke={GOLD} shapeRendering="auto" strokeWidth="1.200" />
    <rect x="1024" y="839" width="148" height="4" fill="#000" />
  </g>
);

const Marker = ({ x, y, dir, label }: { x: number; y: number; dir: "up" | "down" | "left" | "right"; label: string }) => {
  const shapes = {
    down: "M.5 .5h45v50H.5zM0 33.5h6l17 17 17-17h6",
    up: "M.5 .5h45v50H.5zM0 16.5h6l17-16 17 16h6",
    left: "M.5 .5h50v45H.5zM17.5 0v6l-17 17 17 17v6",
    right: "M.5 .5h50v45H.5zM33.5 0v6l17 17-17 17v6",
  };
  const at = { down: [23, 27], up: [23, 42], left: [44, 23], right: [27, 23] }[dir];
  const turned = dir === "left" || dir === "right";
  return (
    <g transform={`translate(${x} ${y})`}>
      <path d={shapes[dir]} stroke={GREEN} fill="none" />
      <text transform={`translate(${at[0]} ${at[1]})${turned ? " rotate(-90)" : ""}`} textAnchor="middle" fontSize="24" fill={GREEN}>
        {label}
      </text>
    </g>
  );
};

const FloorPlan = () => (
  <Plan role="img" aria-label="Pohjapiirros" shapeRendering="crispEdges">
    <g transform="translate(-285 -92)">
      <path d="M4000 196.500H313.500V4000" stroke="#009400" fill="none" />

      <path d="M473 321H1769V843H473zM504 352V812H1738V352z" fill="#000" fillRule="evenodd" />
      <path d="M477 325H1765V839H477zM504 352V812H1738V352z" fill={BEIGE} fillRule="evenodd" />

      <g stroke={GOLD} fill="none">
        <path d={wave(1260)} transform="translate(486 328.500)" />
        <path d={wave(1260)} transform="translate(488 813.500)" />
        <path d={wave(464)} transform="translate(502 350) rotate(90)" />
        <path d={wave(464)} transform="translate(1762 350) rotate(90)" />
      </g>

      <g stroke={GREEN} fill="none">
        <path d="M480 835V328H1762V836" strokeWidth="2" />
        <path d="M501.5 350V813.500H1740.5V349.500H501.5M480 834.500H1762M480 836.500H1762" />
      </g>
      <rect x="503.5" y="351.5" width="1235" height="461" fill="none" stroke="#000" />

      {topStuds.map((x) => <Stud key={x} x={x} y={328} />)}
      {bottomStuds.map((x) => <Stud key={x} x={x} y={813} />)}
      {leftStuds.map((y) => <Stud key={y} x={480} y={y} flat />)}
      {rightStuds.map((y) => <Stud key={y} x={1740} y={y} flat />)}
      <Stud x={480} y={335} flat len={20} />
      <Stud x={480} y={835} flat len={20} />
      <Stud x={1741} y={335} flat len={20} />
      <Stud x={1741} y={836} flat len={20} />
      <Stud x={495} y={335} len={19} />
      <Stud x={495} y={808} len={19} />
      <Stud x={1740} y={335} len={19} />
      <Stud x={1740} y={808} len={19} />

      <g fill="none">
        <path d="M490 339.500H1750.500V825" stroke="#5a5a50" strokeWidth="3" />
        <path d="M490 339.500H1750.500V825" stroke="#000" />
        <path d="M491.5 339V824.500H1750" stroke="#4a5fd0" strokeWidth="3" />
        <path d="M491.5 339V824.500H1750" stroke="#0018f0" />
      </g>

      <WindowMark x={801} />
      <WindowMark x={1173} />
      <DoorMark />

      <g stroke={GOLD} fill="none">
        <path d="M473.5 321v8M476.5 325v4M1768.5 321v8M1765.5 325v4M1768.5 834v9M1765.5 834v5M473.5 834v9" />
      </g>
      <path d="M457 834.500H520M480.5 811V857" stroke="#009400" />

      <g fill="#0a3f9f" textAnchor="middle" fontSize="24">
        <text x="869" y="308">A-9x12</text>
        <text x="1241" y="308">A-9x12</text>
        <text x="1099" y="874">UD1-10x21</text>
      </g>
      <g fill="#000" textAnchor="middle" fontSize="22">
        <text x="1037" y="572">Room</text>
        <text x="1037" y="607">25.7 m<tspan fontSize="16" dy="-8">2</tspan></text>
      </g>

      <Marker x={741} y={234} dir="down" label="E7" />
      <Marker x={1182} y={234} dir="down" label="E6" />
      <Marker x={1539} y={234} dir="down" label="E5" />
      <Marker x={702} y={879} dir="up" label="E1" />
      <Marker x={1193} y={879} dir="up" label="E2" />
      <Marker x={1589} y={879} dir="up" label="E3" />
      <Marker x={1805} y={559} dir="left" label="E4" />
      <Marker x={386} y={559} dir="right" label="E8" />
    </g>
  </Plan>
);

export default function App() {
  return (
    <Shell>
      <Global />
      <RibbonBar />
      <Workspace>
        <SidePanel />
        <Main>
          <FloorPlan />
          <Overlay>
            <ViewTabs>
              <PlainButton aria-label="Malli"><HouseIcon /></PlainButton>
              <PlainButton aria-label="Ikkunat"><WindowsIcon /></PlainButton>
              <PlainButton aria-label="Ruudukko"><GridIcon /></PlainButton>
            </ViewTabs>
            <ToolStrip>
              {tools.map((t) => (
                <Tool key={t.name} $on={t.on} aria-label={t.name}>{t.icon}</Tool>
              ))}
            </ToolStrip>
            <WindowButtons>
              <WinButton aria-label="Pienennä"><Icon w={11} h={14}><path d="M0 12h11v2H0z" fill="#6e6e6e" /></Icon></WinButton>
              <WinButton aria-label="Palauta"><Icon w={13} h={11}><path d="M2 .5h10.500V9M.5 3.500h10v7H.5zM0 4h11" stroke="#6e6e6e" /></Icon></WinButton>
              <WinButton aria-label="Sulje">
                <Icon w={20} h={15}><path d="M0 0h20v15H0z" fill="#c75c5c" /><path d="M7 4l6 7M13 4l-6 7" stroke="#fff" strokeWidth="2" /></Icon>
              </WinButton>
            </WindowButtons>
          </Overlay>
        </Main>
      </Workspace>
    </Shell>
  );
}
